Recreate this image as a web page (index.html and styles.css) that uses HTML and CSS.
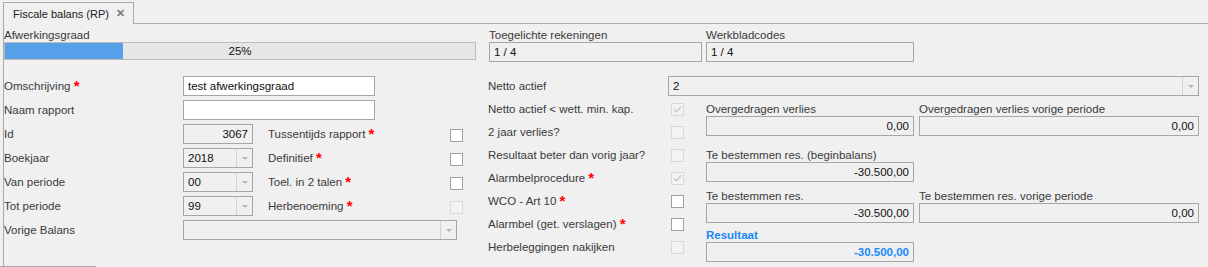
FILE: index.html
```html
<!DOCTYPE html>
<html lang="nl">
<head>
  <meta charset="UTF-8" />
  <title>Fiscale balans (RP)</title>
  <link rel="stylesheet" href="styles.css">
</head>
<body>
  <div class="tabstrip">
    <div class="tab">
      <span class="tab-title">Fiscale balans (RP)</span>
      <span class="tab-close">✕</span>
    </div>
    <div class="tab-fill"></div>
  </div>

  <div class="panel">
    <!-- status row -->
    <div class="status-row">
      <div class="status progress-group">
        <div class="cap">Afwerkingsgraad</div>
        <div class="progress">
          <div class="progress-fill" style="width: 25%"></div>
          <span class="progress-text">25%</span>
        </div>
      </div>
      <div class="status toegelicht">
        <div class="cap">Toegelichte rekeningen</div>
        <div class="box">1 / 4</div>
      </div>
      <div class="status werkblad">
        <div class="cap">Werkbladcodes</div>
        <div class="box">1 / 4</div>
      </div>
    </div>

    <div class="form">
      <!-- left column -->
      <div class="col-left">
        <div class="row">
          <label class="lbl">Omschrijving <span class="req">*</span></label>
          <div class="box edit wide">test afwerkingsgraad</div>
        </div>
        <div class="row">
          <label class="lbl">Naam rapport</label>
          <div class="box edit wide"></div>
        </div>
        <div class="row">
          <label class="lbl">Id</label>
          <div class="box small num">3067</div>
          <label class="sublbl">Tussentijds rapport <span class="req">*</span></label>
          <span class="check"></span>
        </div>
        <div class="row">
          <label class="lbl">Boekjaar</label>
          <div class="box combo small"><span class="val">2018</span><span class="arrow"></span></div>
          <label class="sublbl">Definitief <span class="req">*</span></label>
          <span class="check"></span>
        </div>
        <div class="row">
          <label class="lbl">Van periode</label>
          <div class="box combo small"><span class="val">00</span><span class="arrow"></span></div>
          <label class="sublbl">Toel. in 2 talen <span class="req">*</span></label>
          <span class="check"></span>
        </div>
        <div class="row">
          <label class="lbl">Tot periode</label>
          <div class="box combo small"><span class="val">99</span><span class="arrow"></span></div>
          <label class="sublbl">Herbenoeming <span class="req">*</span></label>
          <span class="check off"></span>
        </div>
        <div class="row">
          <label class="lbl">Vorige Balans</label>
          <div class="box combo long"><span class="val"></span><span class="arrow"></span></div>
        </div>
        <div class="foot"></div>
      </div>

      <!-- middle + right -->
      <div class="col-main">
        <div class="row netto">
          <label class="mlbl-first">Netto actief</label>
          <div class="box combo netto-combo"><span class="val">2</span><span class="arrow"></span></div>
        </div>
        <div class="lower">
          <div class="col-mid">
            <div class="mrow"><label class="mlbl">Netto actief &lt; wett. min. kap.</label><span class="check off"><svg viewBox="0 0 11 11" width="11" height="11"><path d="M2 5.5 L4.5 8 L9 2.5" fill="none" stroke="#c8c8c8" stroke-width="1.2"/></svg></span></div>
            <div class="mrow"><label class="mlbl">2 jaar verlies?</label><span class="check off"></span></div>
            <div class="mrow"><label class="mlbl">Resultaat beter dan vorig jaar?</label><span class="check off"></span></div>
            <div class="mrow"><label class="mlbl">Alarmbelprocedure <span class="req">*</span></label><span class="check off"><svg viewBox="0 0 11 11" width="11" height="11"><path d="M2 5.5 L4.5 8 L9 2.5" fill="none" stroke="#c8c8c8" stroke-width="1.2"/></svg></span></div>
            <div class="mrow"><label class="mlbl">WCO - Art 10 <span class="req">*</span></label><span class="check"></span></div>
            <div class="mrow"><label class="mlbl">Alarmbel (get. verslagen) <span class="req">*</span></label><span class="check"></span></div>
            <div class="mrow"><label class="mlbl">Herbeleggingen nakijken</label><span class="check off"></span></div>
          </div>

          <div class="col-right">
            <div class="pair g1">
              <div class="field">
                <div class="cap">Overgedragen verlies</div>
                <div class="box num">0,00</div>
              </div>
              <div class="field wide-field">
                <div class="cap">Overgedragen verlies vorige periode</div>
                <div class="box num">0,00</div>
              </div>
            </div>
            <div class="pair g2">
              <div class="field">
                <div class="cap">Te bestemmen res. (beginbalans)</div>
                <div class="box num">-30.500,00</div>
              </div>
            </div>
            <div class="pair g3">
              <div class="field">
                <div class="cap">Te bestemmen res.</div>
                <div class="box num">-30.500,00</div>
              </div>
              <div class="field wide-field">
                <div class="cap">Te bestemmen res. vorige periode</div>
                <div class="box num">0,00</div>
              </div>
            </div>
            <div class="pair g4">
              <div class="field result">
                <div class="cap">Resultaat</div>
                <div class="box num">-30.500,00</div>
              </div>
            </div>
          </div>
        </div>
      </div>
    </div>
  </div>
</body>
</html>
```

FILE: styles.css
```css
* {
  margin: 0;
  padding: 0;
  box-sizing: border-box;
}

body {
  font-family: "Liberation Sans", Arial, sans-serif;
  font-size: 11.5px;
  color: #3a3a3a;
  background: #f0f0f0;
  width: 1208px;
  height: 267px;
  overflow: hidden;
}

/* tabs */
.tabstrip {
  display: flex;
  height: 24px;
  padding-left: 3px;
}

.tab {
  margin-top: 2px;
  width: 131px;
  height: 22px;
  border: 1px solid #a9a9a9;
  border-bottom: none;
  background: #f0f0f0;
  display: flex;
  align-items: center;
  padding: 0 8px 0 9px;
  color: #222;
  white-space: nowrap;
}

.tab-title {
  font-size: 11px;
}

.tab-close {
  margin-left: auto;
  color: #7a7a7a;
  font-size: 11px;
  font-weight: bold;
}

.tab-fill {
  flex: 1;
  border-bottom: 1px solid #a9a9a9;
}

/* panel */
.panel {
  margin-left: 3px;
  border-left: 1px solid #a9a9a9;
  padding-top: 4px;
  height: 243px;
}

.cap {
  height: 14px;
  line-height: 14px;
  white-space: nowrap;
}

.status-row {
  display: flex;
}

.progress-group {
  width: 472px;
  margin-right: 13px;
}

.toegelicht {
  width: 213px;
  margin-right: 4px;
}

.werkblad {
  width: 208px;
}

.progress {
  position: relative;
  height: 18px;
  border: 1px solid #bcbcbc;
  background: #e6e6e6;
}

.progress-fill {
  height: 100%;
  background: #56a0ea;
}

.progress-text {
  position: absolute;
  left: 0;
  right: 0;
  top: 0;
  line-height: 16px;
  text-align: center;
  color: #111;
}

.box {
  height: 20px;
  line-height: 18px;
  border: 1px solid #a6a6a6;
  background: #f0f0f0;
  padding: 0 4px;
  color: #111;
  white-space: nowrap;
  overflow: hidden;
}

.box.edit {
  background: #fff;
}

.box.num {
  text-align: right;
}

/* form */
.form {
  display: flex;
  margin-top: 14px;
}

.col-left {
  width: 484px;
}

.row {
  display: flex;
  height: 24px;
}

.lbl {
  width: 179px;
  line-height: 20px;
  white-space: nowrap;
}

.sublbl {
  width: 182px;
  margin-left: 15px;
  line-height: 20px;
  white-space: nowrap;
}

.req {
  color: #f00;
  font-weight: bold;
  font-size: 15px;
  line-height: 10px;
  vertical-align: -1px;
}

.wide {
  width: 192px;
}

.small {
  width: 70px;
}

.long {
  width: 274px;
}

.combo {
  display: flex;
  padding: 0 0 0 4px;
}

.combo .val {
  flex: 1;
}

.combo .arrow {
  width: 16px;
  border-left: 1px solid #d2d2d2;
  display: flex;
  align-items: center;
  justify-content: center;
}

.combo .arrow::after {
  content: "";
  border-left: 3px solid transparent;
  border-right: 3px solid transparent;
  border-top: 3px solid #b4b4b4;
}

.check {
  width: 13px;
  height: 13px;
  margin-top: 5px;
  border: 1px solid #a0a0a0;
  background: #fff;
  display: flex;
  align-items: center;
  justify-content: center;
}

.check.off {
  border-color: #d9d9d9;
  background: #f3f3f3;
}

.foot {
  width: 96px;
  height: 1px;
  background: #a9a9a9;
  margin-left: -4px;
  margin-top: 22px;
}

/* middle + right */
.col-main {
  flex: 1;
}

.row.netto {
  height: 22px;
}

.mlbl-first {
  width: 180px;
  line-height: 20px;
}

.netto-combo {
  width: 531px;
}

.lower {
  display: flex;
}

.col-mid {
  width: 218px;
}

.mrow {
  display: flex;
  height: 23px;
}

.mrow .check {
  margin-top: 5px;
}

.mlbl {
  width: 183px;
  line-height: 23px;
  white-space: nowrap;
}

.col-right {
  width: 493px;
}

.pair {
  display: flex;
  gap: 5px;
}

.g1 { margin-top: 4px; }
.g2 { margin-top: 12px; }
.g3 { margin-top: 7px; }
.g4 { margin-top: 5px; }

.field {
  width: 208px;
}

.field.wide-field {
  width: 280px;
}

.result .cap,
.result .box {
  color: #1a88f8;
  font-weight: bold;
}
```
